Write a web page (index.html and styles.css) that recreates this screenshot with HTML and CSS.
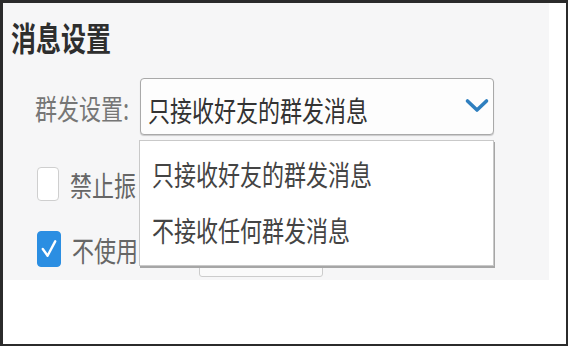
FILE: index.html
```html
<!DOCTYPE html>
<html lang="zh-CN">
<head>
<meta charset="utf-8">
<title>消息设置</title>
<link rel="stylesheet" href="styles.css">
</head>
<body>
<div class="frame">
  <div class="panel">
    <h1 class="title"><span class="t">消息设置</span></h1>
    <div class="group-row">
      <label class="label"><span class="t">群发设置:</span></label>
      <div class="select-wrap">
        <div class="select">
          <span class="t">只接收好友的群发消息</span>
          <svg class="chev" width="26" height="16" viewBox="0 0 26 16"><path d="M3.5 3 L13 12 L22.5 3" fill="none" stroke="#2f7fbf" stroke-width="3.6" stroke-linecap="round" stroke-linejoin="round"/></svg>
        </div>
        <ul class="dropdown">
          <li class="item"><span class="t">只接收好友的群发消息</span></li>
          <li class="item"><span class="t">不接收任何群发消息</span></li>
        </ul>
      </div>
    </div>
    <div class="check-row first">
      <span class="cb"></span>
      <span class="ctext"><span class="t">禁止振</span></span>
    </div>
    <div class="check-row">
      <span class="cb checked"><svg width="23" height="34" viewBox="0 0 23 34"><path d="M5 17 L10 24 L18 9" fill="none" stroke="#ffffff" stroke-width="2.5" stroke-linecap="round" stroke-linejoin="round"/></svg></span>
      <span class="ctext"><span class="t">不使用</span></span>
      <span class="box"></span>
    </div>
  </div>
</div>
</body>
</html>
```
FILE: styles.css
```css
html, body {
  margin: 0;
  padding: 0;
  background: #ffffff;
}
body {
  font-family: "Noto Sans CJK SC", "Noto Sans", sans-serif;
}
.frame {
  width: 568px;
  height: 346px;
  box-sizing: border-box;
  border-style: solid;
  border-color: #2b2b2b;
  border-width: 3px 2px 2px 3px;
  background: #ffffff;
  overflow: hidden;
}
.panel {
  width: 546px;
  height: 277px;
  background: #f6f6f7;
  box-sizing: border-box;
  padding-top: 19px;
}
.t {
  display: inline-block;
  transform: scaleY(1.3);
  white-space: nowrap;
}
.title {
  margin: 0;
  padding-left: 8px;
  font-size: 25px;
  line-height: 30px;
  font-weight: 700;
  color: #2e2e2e;
}
.group-row {
  display: flex;
  align-items: center;
  margin-top: 26px;
  padding-left: 32px;
}
.label {
  width: 105px;
  font-size: 22px;
  line-height: 30px;
  color: #767676;
}
.select-wrap {
  position: relative;
}
.select {
  width: 354px;
  height: 57px;
  box-sizing: border-box;
  border: 1px solid #a9a9a9;
  border-radius: 4px;
  background: #fdfdfd;
  box-shadow: 0 1px 1px rgba(0,0,0,0.18);
  display: flex;
  align-items: center;
  justify-content: space-between;
  padding: 4px 3px 0 7px;
  font-size: 22px;
  color: #333333;
}
.chev {
  margin-top: -6px;
}
.dropdown {
  position: absolute;
  left: -1px;
  top: 62px;
  width: 355px;
  height: 126px;
  box-sizing: border-box;
  margin: 0;
  padding: 4px 0 0 0;
  list-style: none;
  background: #ffffff;
  border: 1px solid #c9c9c9;
  box-shadow: 1px 2px 0 #a6a6a6;
  z-index: 2;
}
.item {
  height: 56px;
  display: flex;
  align-items: center;
  padding-left: 12px;
  font-size: 22px;
  color: #444444;
}
.check-row {
  display: flex;
  align-items: center;
  height: 40px;
  padding-left: 34px;
  margin-top: 25px;
}
.check-row.first {
  margin-top: 29px;
}
.cb {
  width: 22px;
  height: 34px;
  box-sizing: border-box;
  border: 1px solid #cfcfcf;
  border-radius: 4px;
  background: #ffffff;
  flex: none;
}
.cb.checked {
  width: 24px;
  height: 36px;
  background: #2b8ee2;
  border-color: #2b8ee2;
  display: flex;
  align-items: center;
  justify-content: center;
}
.ctext {
  width: 69px;
  margin-left: 11px;
  font-size: 22px;
  line-height: 30px;
  color: #666666;
  flex: none;
}
.cb.checked + .ctext {
  width: 67px;
}
.box {
  width: 124px;
  height: 52px;
  box-sizing: border-box;
  margin-top: 4px;
  margin-left: 60px;
  border: 1px solid #cccccc;
  border-radius: 3px;
  background: #fafafa;
  flex: none;
}
```
